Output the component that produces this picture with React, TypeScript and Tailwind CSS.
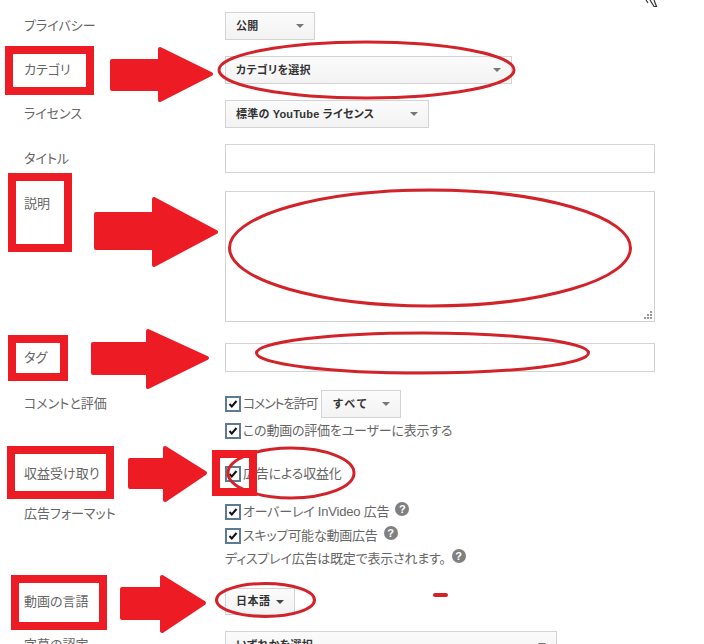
import type { ReactNode } from "react";

const RED = "#ed1c24";
const LINE = "#d2232a";

function Select({ label, width, arrowDark, textClass = "tracking-[0.2px]", padClass = "pl-[10px]" }: { label: string; width: string; arrowDark?: boolean; textClass?: string; padClass?: string }) {
  return (
    <div className={`flex h-full ${width} items-center justify-between border border-[#d3d3d3] bg-gradient-to-b from-[#fbfbfb] to-[#f3f3f3] ${padClass} pr-[10px] text-[11px] font-bold text-[#333]`}>
      <span className={`whitespace-nowrap ${textClass}`}>{label}</span>
      <svg width="8" height="4" viewBox="0 0 8 4" className="shrink-0">
        <path d="M0 0h8L4 4z" fill={arrowDark ? "#444" : "#777"} />
      </svg>
    </div>
  );
}

function Row({ label, className, top, labelClass = "", children }: { label?: string; className: string; top?: boolean; labelClass?: string; children?: ReactNode }) {
  return (
    <div className={`flex ${top ? "items-start" : "items-center"} ${className}`}>
      <div className={`w-[225px] shrink-0 pl-6 text-[13px] text-[#666] ${top ? "pt-[3px]" : ""} ${labelClass}`}>{label}</div>
      {children}
    </div>
  );
}

function Check({ children, textClass = "tracking-[-0.2px]" }: { children: ReactNode; textClass?: string }) {
  return (
    <div className="flex items-center whitespace-nowrap text-[13px] text-[#666]">
      <div className="flex h-4 w-4 shrink-0 items-center justify-center border-2 border-[#5f7a94] bg-white">
        <svg width="10" height="8" viewBox="0 0 10 8">
          <path d="M1.5 4l2.3 2.5L8.5 1" fill="none" stroke="#111" strokeWidth="2" />
        </svg>
      </div>
      <span className={`ml-[2px] ${textClass}`}>{children}</span>
    </div>
  );
}

function Help() {
  return (
    <span className="ml-[6px] mt-[-6px] flex h-[14px] w-[14px] shrink-0 items-center justify-center rounded-full bg-[#808080] text-[11px] font-bold leading-none tracking-normal text-white">
      ?
    </span>
  );
}

function Arrow({ x0, x1, x2, sTop, sBot, hTop, hBot, tipY }: { x0: number; x1: number; x2: number; sTop: number; sBot: number; hTop: number; hBot: number; tipY: number }) {
  return (
    <path
      d={`M${x0} ${sTop}H${x1}V${hTop}L${x2} ${tipY}L${x1} ${hBot}V${sBot}H${x0}Z`}
      fill={RED}
      stroke={RED}
      strokeWidth="4"
      strokeLinejoin="round"
    />
  );
}

export default function App() {
  return (
    <div className="relative h-[644px] w-[704px] overflow-hidden bg-white pt-3 font-['Liberation_Sans','Noto_Sans_CJK_JP',sans-serif] [font-feature-settings:'palt']">
      <Row label="プライバシー" className="h-7">
        <Select label="公開" width="w-[90px]" />
      </Row>
      <Row label="カテゴリ" className="mt-4 h-7">
        <Select label="カテゴリを選択" width="w-[287px]" />
      </Row>
      <Row label="ライセンス" className="mt-4 h-7">
        <Select label="標準の YouTube ライセンス" width="w-[204px]" />
      </Row>
      <Row label="タイトル" className="mt-4 h-[29px]">
        <div className="h-full w-[430px] border border-[#d3d3d3] bg-white" />
      </Row>
      <Row label="説明" top className="mt-[18px] h-[131px]">
        <div className="relative h-full w-[430px] border border-[#d3d3d3] bg-white">
          <svg width="10" height="9" viewBox="0 0 10 9" className="absolute bottom-[1px] right-[1px]" fill="#999">
            <rect x="7" y="0" width="2" height="2" />
            <rect x="4" y="3" width="2" height="2" />
            <rect x="7" y="3" width="2" height="2" />
            <rect x="1" y="6" width="2" height="2" />
            <rect x="4" y="6" width="2" height="2" />
            <rect x="7" y="6" width="2" height="2" />
          </svg>
        </div>
      </Row>
      <Row label="タグ" className="mt-[21px] h-[29px]">
        <div className="h-full w-[430px] border border-[#d3d3d3] bg-white" />
      </Row>
      <Row label="コメントと評価" className="mt-[18px] h-7">
        <div className="flex h-full items-center">
          <Check textClass="tracking-[-1.3px]">コメントを許可</Check>
          <div className="ml-1 h-full">
            <Select label="すべて" width="w-[80px]" textClass="tracking-[2px]" padClass="pl-[11px]" />
          </div>
        </div>
      </Row>
      <Row className="mt-1 h-[18px]">
        <Check>この動画の評価をユーザーに表示する</Check>
      </Row>
      <Row label="収益受け取り" className="mt-[25px] h-[18px]">
        <Check>広告による収益化</Check>
      </Row>
      <Row label="広告フォーマット" labelClass="pt-1" className="mt-[20px] h-[18px]">
        <div className="flex items-center">
          <Check>オーバーレイ InVideo 広告</Check>
          <Help />
        </div>
      </Row>
      <Row className="mt-[6px] h-[18px]">
        <div className="flex items-center">
          <Check>スキップ可能な動画広告</Check>
          <Help />
        </div>
      </Row>
      <Row className="mt-[5px] h-[18px]">
        <div className="flex items-center whitespace-nowrap text-[13px] tracking-[-0.2px] text-[#666]">
          ディスプレイ広告は既定で表示されます。
          <Help />
        </div>
      </Row>
      <Row label="動画の言語" className="mt-[20px] h-[27px]">
        <Select label="日本語" width="w-[70px]" arrowDark textClass="tracking-[0.5px]" />
      </Row>
      <Row label="字幕の認定" className="mt-4 h-7">
        <Select label="いずれかを選択" width="w-[332px]" />
      </Row>

      {/* hand drawn annotations on top of the form */}
      <svg width="704" height="644" viewBox="0 0 704 644" className="pointer-events-none absolute left-0 top-0">
        <g fill="none" stroke={LINE} strokeWidth="3">
          <ellipse cx="366.5" cy="70" rx="147.5" ry="28" />
          <ellipse cx="430" cy="248" rx="200.5" ry="58" />
          <ellipse cx="422.5" cy="353" rx="166" ry="20" />
          <ellipse cx="291" cy="473" rx="63" ry="25" />
          <ellipse cx="265.5" cy="600" rx="49" ry="16.5" />
        </g>
        <g fill="none" stroke={RED} strokeWidth="8">
          <rect x="9" y="50" width="81" height="41" />
          <rect x="12" y="177" width="56" height="71" />
          <rect x="12" y="339" width="52" height="38" />
          <rect x="11" y="450" width="99" height="45" />
          <rect x="216" y="454" width="37" height="38" />
          <rect x="15" y="579" width="88" height="47" />
        </g>
        <Arrow x0={112} x1={160} x2={211} sTop={61} sBot={89} hTop={49} hBot={100} tipY={74} />
        <Arrow x0={96} x1={154} x2={216} sTop={214} sBot={248} hTop={199} hBot={265} tipY={232} />
        <Arrow x0={93} x1={148} x2={207} sTop={344} sBot={373} hTop={331} hBot={387} tipY={358} />
        <Arrow x0={130} x1={165} x2={205} sTop={460} sBot={487} hTop={448} hBot={500} tipY={473} />
        <Arrow x0={122} x1={162} x2={204} sTop={589} sBot={618} hTop={577} hBot={631} tipY={603} />
        <path d="M435 595h11" stroke={LINE} strokeWidth="4" strokeLinecap="round" />
        <path d="M646 0l2 3M650 0l4 6.5h2.5L654 0" fill="none" stroke="#333" strokeWidth="1.2" />
      </svg>
    </div>
  );
}
